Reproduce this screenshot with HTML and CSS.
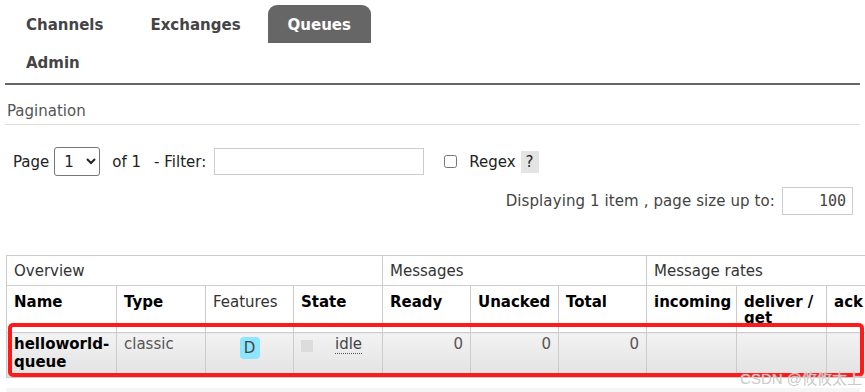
FILE: index.html
```html
<!DOCTYPE html>
<html lang="en">

<head>
  <meta charset="UTF-8">
  <meta name="viewport" content="width=device-width, initial-scale=1.0">
  <title>Queues</title>
  <link rel="stylesheet" href="styles.css">
</head>

<body>
  <ul class="tabs">
    <li><a href="#">Channels</a></li>
    <li><a href="#">Exchanges</a></li>
    <li class="active"><a href="#">Queues</a></li>
    <li><a href="#">Admin</a></li>
  </ul>

  <div class="section">
    <h3>Pagination</h3>
    <div class="filter-row">
      <label>Page</label>
      <select class="page-select">
        <option>1</option>
      </select>
      <span class="of">of 1</span>
      <label>- Filter:</label>
      <input class="filter-input" type="text">
      <input class="regex-check" type="checkbox">
      <label>Regex</label>
      <span class="help">?</span>
    </div>
    <div class="size-row">
      <label>Displaying 1 item , page size up to:</label>
      <input class="size-input" type="text" value="100">
    </div>
  </div>

  <div class="table-wrap">
    <table class="list">
      <colgroup>
        <col class="c-name">
        <col class="c-type">
        <col class="c-feat">
        <col class="c-state">
        <col class="c-num">
        <col class="c-num">
        <col class="c-num">
        <col class="c-rate">
        <col class="c-rate">
        <col class="c-rate">
      </colgroup>
      <thead>
        <tr class="group">
          <th colspan="4">Overview</th>
          <th colspan="3">Messages</th>
          <th colspan="3">Message rates</th>
        </tr>
        <tr class="cols">
          <th>Name</th>
          <th>Type</th>
          <th class="plain">Features</th>
          <th>State</th>
          <th>Ready</th>
          <th>Unacked</th>
          <th>Total</th>
          <th>incoming</th>
          <th>deliver / get</th>
          <th>ack</th>
        </tr>
      </thead>
      <tbody>
        <tr class="data">
          <td class="name">helloworld-queue</td>
          <td class="muted">classic</td>
          <td class="center"><span class="badge">D</span></td>
          <td><span class="state-dot"></span><abbr class="state">idle</abbr></td>
          <td class="num">0</td>
          <td class="num">0</td>
          <td class="num">0</td>
          <td></td>
          <td></td>
          <td></td>
        </tr>
      </tbody>
    </table>
    <div class="highlight"></div>
  </div>
  <div class="next-section"></div>
  <div class="watermark">CSDN @攸攸太上</div>
</body>

</html>
```

FILE: styles.css
```css
* {
  margin: 0;
  padding: 0;
  box-sizing: border-box;
}

body {
  font-family: "DejaVu Sans", Verdana, sans-serif;
  font-size: 15px;
  color: #333;
  background: white;
  overflow: hidden;
}

.tabs {
  list-style: none;
  display: flex;
  flex-wrap: wrap;
  gap: 0 7px;
  width: 420px;
  padding: 5px 0 0 6px;
}

.tabs li {
  height: 38px;
  border-radius: 9px 9px 0 0;
}

.tabs a {
  display: block;
  padding: 0 20px;
  line-height: 40px;
  font-weight: bold;
  color: #444;
  text-decoration: none;
}

.tabs .active {
  background: #666;
}

.tabs .active a {
  color: white;
}

.tabs + .section {
  border-top: 2px solid #666;
  margin: 2px 5px 0;
}

.section h3 {
  font-size: 15px;
  font-weight: normal;
  color: #555;
  margin-top: 17px;
  padding: 0 0 4px 2px;
  border-bottom: 1px solid #ddd;
}

.filter-row {
  display: flex;
  align-items: center;
  padding: 22px 0 0 8px;
  color: #222;
}

.page-select {
  width: 46px;
  height: 29px;
  margin: 0 12px 0 5px;
  font-family: inherit;
  font-size: 15px;
  padding-left: 5px;
  border: 1px solid #767676;
  border-radius: 3px;
  background: white;
  color: #222;
}

.of {
  margin-right: 13px;
}

.filter-input {
  width: 210px;
  height: 27px;
  margin-left: 8px;
  border: 1px solid #ccc;
}

.regex-check {
  width: 13px;
  height: 13px;
  margin: 0 12px 0 20px;
}

.help {
  background: #e4e4e4;
  padding: 2px 5px;
  margin-left: 5px;
  line-height: 18px;
}

.size-row {
  display: flex;
  justify-content: flex-end;
  align-items: center;
  padding: 11px 7px 0 0;
  color: #444;
}

.size-row label {
  letter-spacing: 0.1px;
}

.size-input {
  width: 71px;
  height: 28px;
  margin-left: 7px;
  border: 1px solid #ccc;
  text-align: right;
  padding-right: 6px;
  font-family: "DejaVu Sans Mono", monospace;
  font-size: 15px;
  color: #444;
}

.table-wrap {
  position: relative;
  margin: 40px 0 0 6px;
  overflow: hidden;
}

.list {
  border-collapse: collapse;
  width: 910px;
  table-layout: fixed;
}

.list th,
.list td {
  border: 1px solid #ccc;
  padding: 6px 7px;
  line-height: 16px;
  text-align: left;
  vertical-align: top;
}

.list .group th {
  font-weight: normal;
  color: #333;
  padding: 7px 7px 6px;
}

.list .cols th {
  color: #000;
  height: 45px;
  padding-top: 8px;
}

.list th.plain {
  font-weight: normal;
  color: #333;
}

.c-name { width: 110px; }
.c-type { width: 89px; }
.c-feat { width: 88px; }
.c-state { width: 89px; }
.c-num { width: 88px; }
.c-rate { width: 90px; }

.data td {
  background: linear-gradient(#f2f2f2, #e2e2e2);
  height: 43px;
  padding-top: 2px;
  line-height: 18px;
}

.data .name {
  font-weight: bold;
  color: #000;
}

.data .muted {
  color: #555;
}

.data .center {
  text-align: center;
}

.data .num {
  text-align: right;
  color: #555;
}

.badge {
  display: inline-block;
  width: 20px;
  height: 22px;
  line-height: 22px;
  text-align: center;
  background: #8de6ff;
  border-radius: 4px;
  color: #444;
  margin-top: 2px;
}

.state-dot {
  display: inline-block;
  width: 12px;
  height: 12px;
  background: #dcdcdc;
  margin: 5px 22px 0 0;
  vertical-align: top;
}

.state {
  text-decoration: none;
  border-bottom: 1px dotted #555;
  color: #444;
}

.highlight {
  position: absolute;
  left: 2px;
  top: 68px;
  width: 856px;
  height: 54px;
  border: 4px solid #ff1a1a;
  border-radius: 5px;
}

.watermark {
  position: absolute;
  right: 3px;
  top: 367px;
  font-size: 15px;
  white-space: nowrap;
  color: rgba(190, 190, 190, 0.85);
  font-family: "Liberation Sans", "Noto Sans CJK SC", sans-serif;
  text-shadow: 0 0 1px white;
}

.next-section {
  margin: 10px 5px 0 6px;
  height: 20px;
  background: #f5f5f5;
}
```
